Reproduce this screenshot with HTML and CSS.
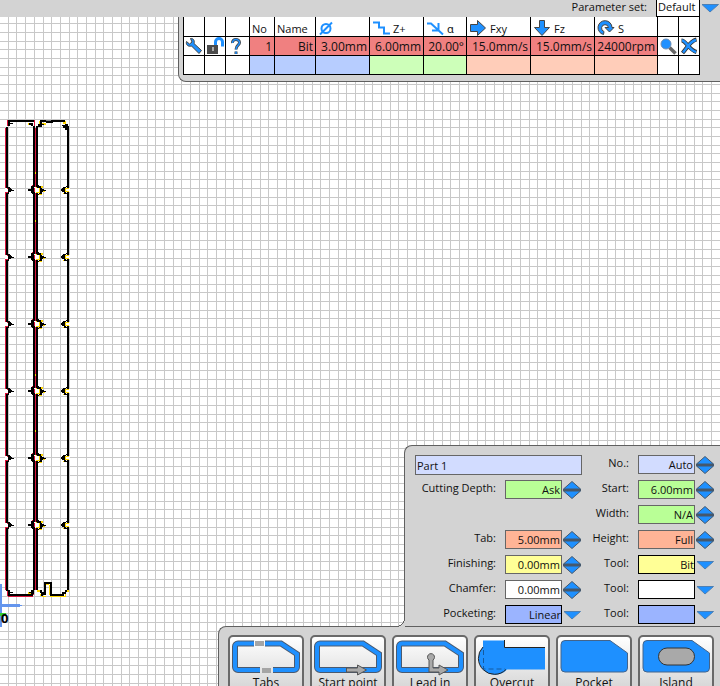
FILE: index.html
```html
<!DOCTYPE html>
<html lang="en">
<head>
<meta charset="utf-8">
<title>Toolpath editor</title>
<link rel="stylesheet" href="styles.css">
</head>
<body>
<svg class="canvas" aria-label="Workpiece" shape-rendering="crispEdges">
  <defs>
    <g id="notch">
      <path class="white" d="M5 -2h3v4h-3zM34 -3h6v6h-6zM65 -2h5v4h-5z"/>
      <path class="red" d="M5 -3h3v1h-3zM5 2h3v1h-3zM7 -2h1v1h-1zM34 -2h1v4h-1zM32 -5h1v1h-1z"/>
      <path class="yellow" d="M36 -3h4v1h-4zM36 2h4v1h-4zM39 -2h1v4h-1zM41 -4h2v2h-2zM43 1h2v1h-2zM38 4h4v1h-4zM65 -2h4v1h-4zM65 1h4v1h-4zM64 -1h2v2h-2zM63 -3h2v1h-2zM63 3h2v1h-2z"/>
      <path d="M6 -5h2v2h2v1h1v1h1v1h2v1h-3v1h-2v2h-1v1h-2v-2h2v-5h-2z"/>
      <path d="M33 -5v1h-2v3h-3v2h3v2h1v1h3v-2h-1v-5h1v-2zM36 -5h3v1h2v2h1v1h2v1h2v1h-3v1h-1v2h-3v1h-3v-1h3v-1h1v-5h-3z"/>
      <path d="M67 -5h2v2h-3v1h-1v4h1v1h3v2h-2v-1h-3v-2h-2v-1h-1v-2h1v-1h1v-1h3z"/>
    </g>
  </defs>
  <path id="grid" class="grid"/>
  <path class="red" d="M5 128h1v462h-1zM7 120h1v6h-1zM34 120h1v6h-1zM35 128h1v462h-1zM7 589h1v7h-1zM8 596h25v1h-25zM33 590h1v5h-1z"/>
  <path class="yellow" d="M39 121h2v4h-2zM42 123h4v2h-4zM63 121h3v3h-3zM28 123h4v2h-4zM64 126h2v2h-2zM35 172h1v2h-1zM35 220h1v2h-1zM35 374h1v2h-1zM35 430h1v2h-1zM37 590h3v2h-3zM40 594h2v2h-2zM42 596h4v1h-4zM46 584h3v1h-3zM49 585h1v10h-1zM50 596h16v1h-16zM65 590h4v2h-4zM65 592h1v4h-1zM28 592h3v2h-3z"/>
  <path d="M8 120h26v2h-24v1h3v1h-3v2h-2v464h2v2h3v1h-3v1h23v2h-25v-5h-2v-464h2zM33 126h2v464h-2zM29 123h4v3h-2v-1h-2zM29 592h2v-2h3v4h-3v-1h-2z"/>
  <path d="M36 126h2v464h-2zM38 124h2v-4h25v4h3v6h-3v-2h-2v-2h-1v-1h3v-3h-12v1h-7v-1h-4v2h2v1h-2v2h-4zM67 126h2v464h-2zM40 590h2v2h2v-10h8v12h10v-2h3v-2h2v2h-1v2h-2v2h-14v-12h-4v11h-3v1h-2v-3h-1z"/>
  <path class="gray" d="M46 120h5v1h-5z"/>
  <use href="#notch" y="190"/>
  <use href="#notch" y="257"/>
  <use href="#notch" y="324"/>
  <use href="#notch" y="391"/>
  <use href="#notch" y="458"/>
  <use href="#notch" y="525"/>
  <path class="axis" d="M0 584h2v20h18v1h2v1h-2v1h-18v20h-2z"/>
  <path class="green" d="M0 613h6v3h-6z"/>
  <text class="origin" x="1" y="623">0</text>
</svg>

<div class="app">
  <header class="top">
    <div class="paramset">
      <label for="pset">Parameter set:</label>
      <select id="pset"><option>Default</option></select>
      <svg class="drop" viewBox="0 0 18 18"><path d="M1 4.500H17.500L9 12z"/></svg>
    </div>
    <div class="tablebox">
      <table>
        <colgroup><col class="w21"><col class="w21"><col class="w24"><col class="w25"><col class="w41"><col class="w54"><col class="w54"><col class="w43"><col class="w64"><col class="w64"><col class="w63"><col class="w21"><col class="w21"></colgroup>
        <tr class="head">
          <th></th><th></th><th></th><th>No</th><th>Name</th>
          <th><svg viewBox="0 0 18 18"><g class="line"><circle cx="8" cy="9.500" r="4.500"/><path d="M2 15.500L14 3.500"/></g></svg></th>
          <th><svg viewBox="0 0 18 18"><path class="line" d="M1 3.500h6v5h5v6h6"/></svg>Z+</th>
          <th><svg viewBox="0 0 18 18"><path class="line" d="M1 4.500h4l12 11M12.500 4v7.500H6"/></svg>ɑ</th>
          <th><svg viewBox="0 0 18 18"><path class="solid" d="M1.500 5.500h7v-4L16.500 9l-8 7.500v-4h-7z"/></svg>Fxy</th>
          <th><svg viewBox="0 0 18 18"><path class="solid" d="M6.500 1.500h5v7h5L9 16.500 1.500 8.500h5z"/></svg>Fz</th>
          <th><svg viewBox="0 0 18 18"><path class="solid" d="M6.500 15.500A7 7 0 1 1 15 8.500h2L12.500 13 8 8.500h3.500a3.500 3.500 0 1 0-4.500 4z"/></svg>S</th>
          <th></th><th></th>
        </tr>
        <tr class="row">
          <td class="ic"><button type="button" aria-label="Edit tool"><svg viewBox="0 0 18 18"><path class="solid" d="M5.500 1.500C8.500 1 10 4 9 6.500l7.500 7-2.500 3L6.500 9C3.500 10 .5 8 1.500 4.500L4.500 7 7 5z"/></svg></button></td>
          <td class="ic"><button type="button" aria-label="Unlock tool"><svg viewBox="0 0 18 18"><path d="M9.500 8.500V5a3.500 3.500 0 0 1 7 0v4.500" fill="none" stroke="#1e90ff" stroke-width="3"/><path d="M1 8h11v9H1z" fill="#4b4b4b"/><path d="M6 10h2v4H6z" fill="#aaa"/></svg></button></td>
          <td class="ic"><button type="button" aria-label="Help"><svg viewBox="0 0 18 18"><path d="M5.500 6C5 1.500 12.500 1.500 12.500 5.500 12.500 8.500 9 8 9 12.500M9 14.500v2.500" fill="none" stroke="#444" stroke-width="3"/><path d="M5.500 6C5 1.500 12.500 1.500 12.500 5.500 12.500 8.500 9 8 9 12.500M9 14.500v2.500" fill="none" stroke="#1e90ff" stroke-width="1.500"/></svg></button></td>
          <td>1</td><td>Bit</td><td>3.00mm</td><td>6.00mm</td><td>20.00°</td><td>15.0mm/s</td><td>15.0mm/s</td><td>24000rpm</td>
          <td class="ic"><button type="button" aria-label="Find tool"><svg viewBox="0 0 18 18"><path d="M10.500 10.500l6 6" stroke="#666" stroke-width="3.500"/><circle cx="7" cy="7" r="5" fill="#1e90ff" stroke="#6e8db3"/></svg></button></td>
          <td class="ic"><button type="button" aria-label="Delete tool"><svg viewBox="0 0 18 18"><path d="M1.500 3.500C6 3.500 9 13 16.500 15M16.500 2.500C10 4 7 11 2.500 16" fill="none" stroke="#333" stroke-width="4"/><path d="M2 3.500C6 3.500 9 13 16 15M16 3C10 4 7 11 3 15.500" fill="none" stroke="#1e90ff" stroke-width="2.500"/></svg></button></td>
        </tr>
        <tr class="blank">
          <td></td><td></td><td></td><td class="b"></td><td class="b"></td><td class="b"></td><td class="g"></td><td class="g"></td><td class="o"></td><td class="o"></td><td class="o"></td><td></td><td></td>
        </tr>
      </table>
    </div>
  </header>

  <form class="props">
    <input class="name" aria-label="Part name" value="Part 1">
    <label for="no">No.:</label><input id="no" class="lilac" value="Auto"><span class="spin"></span>

    <label for="depth">Cutting Depth:</label><input id="depth" class="lime" value="Ask"><span class="spin"></span>
    <label for="start">Start:</label><input id="start" class="lime" value="6.00mm"><span class="spin"></span>

    <label class="right" for="width">Width:</label><input id="width" class="lime" value="N/A"><span class="spin"></span>

    <label for="tab">Tab:</label><input id="tab" class="salmon" value="5.00mm"><span class="spin"></span>
    <label for="height">Height:</label><input id="height" class="salmon" value="Full"><span class="spin"></span>

    <label for="fin">Finishing:</label><input id="fin" class="lemon" value="0.00mm"><span class="spin"></span>
    <label for="t1">Tool:</label><select id="t1" class="lemon"><option>Bit</option></select><svg class="drop" viewBox="0 0 18 18"><path d="M1 6.500H17.500L9 14z"/></svg>

    <label for="cham">Chamfer:</label><input id="cham" value="0.00mm"><span class="spin"></span>
    <label for="t2">Tool:</label><select id="t2"><option></option></select><svg class="drop" viewBox="0 0 18 18"><path d="M1 6.500H17.500L9 14z"/></svg>

    <label for="pock">Pocketing:</label><select id="pock" class="blue"><option>Linear</option></select><svg class="drop" viewBox="0 0 18 18"><path d="M1 6.500H17.500L9 14z"/></svg>
    <label for="t3">Tool:</label><select id="t3" class="blue"><option></option></select><svg class="drop" viewBox="0 0 18 18"><path d="M1 6.500H17.500L9 14z"/></svg>
  </form>

  <nav class="tools">
    <button type="button"><svg viewBox="0 0 76 42"><g class="pipe"><path d="M26 7.500H10a3 3 0 0 0-3 3V31a3 3 0 0 0 3 3H32M37 7.500H53L69 18V31a3 3 0 0 1-3 3H45"/><path d="M26 7.500H10a3 3 0 0 0-3 3V31a3 3 0 0 0 3 3H32M37 7.500H53L69 18V31a3 3 0 0 1-3 3H45"/></g><path d="M27 5h9v5h-9zM34 32h9v5h-9z" fill="#a5a5a5"/></svg>Tabs</button>
    <button type="button"><svg viewBox="0 0 76 42"><g class="pipe"><path d="M10 7.500H53L69 18V31a3 3 0 0 1-3 3H10a3 3 0 0 1-3-3V10.500a3 3 0 0 1 3-3z"/><path d="M10 7.500H53L69 18V31a3 3 0 0 1-3 3H10a3 3 0 0 1-3-3V10.500a3 3 0 0 1 3-3z"/></g><path class="arrow" d="M36.500 32h11v-3l9 5-9 5v-3h-11z"/></svg>Start point</button>
    <button type="button"><svg viewBox="0 0 76 42"><g class="pipe"><path d="M10 7.500H53L69 18V31a3 3 0 0 1-3 3H10a3 3 0 0 1-3-3V10.500a3 3 0 0 1 3-3z"/><path d="M10 7.500H53L69 18V31a3 3 0 0 1-3 3H10a3 3 0 0 1-3-3V10.500a3 3 0 0 1 3-3z"/></g><path class="arrow" d="M37 36V24a3.500 3.500 0 1 1 4 0v8h6v-3l9 5-9 5v-3z"/></svg>Lead in</button>
    <button type="button"><svg viewBox="0 0 76 42"><path d="M9 4.500h21v7h41v22H33A15.500 15.500 0 0 1 9 11z" fill="#1e90ff"/><path d="M9 11A15 15 0 0 0 32 33.500M30.500 4v7.500H71" fill="none" stroke="#222" stroke-width="1"/><path d="M9.500 14v19H31" fill="none" stroke="#155a9f" stroke-dasharray="5 3"/></svg>Overcut</button>
    <button type="button"><svg viewBox="0 0 76 42"><path class="plate" d="M9 4.500H54L71.500 17V32a4 4 0 0 1-4 4H9a4 4 0 0 1-4-4V8.500a4 4 0 0 1 4-4z"/></svg>Pocket</button>
    <button type="button"><svg viewBox="0 0 76 42"><path class="plate" d="M9 4.500H54L71.500 17V32a4 4 0 0 1-4 4H9a4 4 0 0 1-4-4V8.500a4 4 0 0 1 4-4z"/><rect x="20.500" y="12" width="36" height="17" rx="8.500" fill="#a9a9a9" stroke="#333"/></svg>Island</button>
  </nav>
</div>
<script src="app.js"></script>
</body>
</html>
```
FILE: styles.css
```css
* { box-sizing: border-box; }
body {
  margin: 0;
  overflow: hidden;
  background: #fff;
  color: #111;
  font: 11px/16px "Open Sans", "Noto Sans", sans-serif;
}
button, input, select { font: inherit; color: inherit; margin: 0; }
svg { display: block; }

.canvas { position: absolute; inset: 0; width: 100%; height: 100%; }
.grid { stroke: #c8c8c8; fill: none; }
.red { fill: #dc143c; }
.yellow { fill: #ffd700; }
.white { fill: #fff; }
.gray { fill: #808080; }
.axis { fill: #6495ed; }
.green { fill: #32cd32; }
.origin { font-size: 13px; font-weight: 700; fill: #000; }

.app {
  position: relative;
  display: flex;
  flex-direction: column;
  align-items: flex-end;
  height: 100vh;
}

.top { width: 100%; display: flex; flex-direction: column; align-items: flex-end; }
.paramset {
  width: 100%;
  height: 17px;
  display: flex;
  justify-content: flex-end;
  padding-right: 1px;
  background: #d3d3d3;
}
.paramset label { margin-right: 9px; line-height: 13px; }
select {
  appearance: none;
  width: 57px;
  height: 19px;
  padding: 0;
  border: 1px solid #000;
  border-radius: 0;
  background: #fff;
  text-align: right;
}
.paramset select {
  width: 44px;
  height: 17px;
  margin-right: 1px;
  border-top: 0;
  padding: 0 0 3px 1px;
  line-height: 13px;
  text-align: left;
}
.drop { width: 18px; height: 18px; flex: none; fill: #1e90ff; stroke: #4d7fb3; }

.tablebox {
  padding: 0 20px 6px 4px;
  background: #d3d3d3;
  border: solid #606060;
  border-width: 0 0 1px 1px;
  border-bottom-left-radius: 8px;
}
table { border-collapse: collapse; table-layout: fixed; width: 517px; font-size: 12px; line-height: 16px; }
.w21 { width: 21px; } .w24 { width: 24px; } .w25 { width: 25px; } .w41 { width: 41px; }
.w43 { width: 43px; } .w54 { width: 54px; } .w63 { width: 63px; } .w64 { width: 64px; }
th, td { height: 19px; padding: 0; border: 1px solid #000; background: #fff; white-space: nowrap; }
th {
  border-top: 0;
  padding: 4px 0 0 2px;
  text-align: left;
  font-weight: 400;
  font-size: 11px;
  line-height: 14px;
  vertical-align: bottom;
}
th svg { display: inline-block; width: 18px; height: 18px; margin: -3px 3px -3px 0; vertical-align: top; }
td { text-align: right; padding: 2px 2px 0 0; background: #f08080; }
td.ic { padding: 0; background: #fff; }
td button { display: block; padding: 0; border: 0; background: none; margin-left: 1px; }
td button svg { width: 18px; height: 18px; }
.blank td { background: #fff; }
.blank .b { background: #b7cdff; }
.blank .g { background: #cdffb9; }
.blank .o { background: #ffcdb9; }
.line { fill: none; stroke: #1e90ff; stroke-width: 2; }
.solid { fill: #1e90ff; stroke: #444; }

.props {
  position: relative;
  margin-top: auto;
  width: 316px;
  display: grid;
  grid-template-columns: 90px 58px 19px 56px 58px 19px;
  grid-template-rows: repeat(6, 25px) 21px;
  padding: 9px 5px 0 10px;
  background: #d3d3d3;
  border: solid #606060;
  border-width: 1px 0 0 1px;
  border-top-left-radius: 8px;
}
.props::before {
  content: "";
  position: absolute;
  left: -9px;
  bottom: -1px;
  width: 9px;
  height: 9px;
  background: radial-gradient(circle at 0 0, transparent 8px, #606060 8px, #606060 9px, #d3d3d3 9px);
}
.props label { padding-right: 9px; text-align: right; }
.props label.right { grid-column: 4; }
input {
  width: 57px;
  height: 19px;
  padding: 0 1px;
  border: 1px solid #666;
  background: #fff;
  text-align: right;
}
.name { grid-column: span 3; width: 167px; height: 20px; text-align: left; }
.name, .lilac { background: #d2dcff; }
.lime { background: #b9ff96; }
.salmon { background: #ffb496; }
.lemon { background: #ffff96; }
.blue { background: #9bb4ff; }
.spin { display: flex; flex-direction: column; width: 18px; padding-top: 1px; }
.spin button { width: 18px; height: 9px; padding: 0; border: 0; background: none; }
.spin svg { width: 18px; height: 9px; fill: #1e90ff; stroke: #46586b; }

.tools {
  width: 502px;
  height: 60px;
  overflow: hidden;
  display: flex;
  gap: 6px;
  padding: 8px 6px 0 9px;
  background: #d3d3d3;
  border: solid #606060;
  border-width: 1px 0 0 1px;
  border-top-left-radius: 8px;
}
.tools button {
  flex: 1 1 0;
  min-width: 0;
  height: 66px;
  display: flex;
  flex-direction: column;
  align-items: center;
  padding: 0;
  border: 2px solid #696969;
  border-radius: 5px;
  background: linear-gradient(#fff, #d3d3d3 90%);
  font-size: 12px;
  line-height: 16px;
}
.tools svg { flex: none; width: 76px; height: 42px; margin: -1px -2px -3px; }
.pipe path { fill: none; stroke: #4a5a70; stroke-width: 6; }
.pipe path + path { stroke: #1e90ff; stroke-width: 4; }
.arrow { fill: #a9a9a9; stroke: #555; }
.plate { fill: #1e90ff; stroke: #44648a; }
```
FILE: app.js
```js
// Grid lines snapped to whole pixels.
var STEP = 8.68;
function drawGrid() {
  var w = window.innerWidth, h = window.innerHeight, d = "", v;
  for (v = 8.3; v < w; v += STEP) d += "M" + (Math.floor(v) + 0.5) + " 0V" + h;
  for (v = 6.3; v < h; v += STEP) d += "M0 " + (Math.floor(v) + 0.5) + "H" + w;
  document.getElementById("grid").setAttribute("d", d);
}
drawGrid();
window.addEventListener("resize", drawGrid);

document.querySelectorAll(".spin").forEach(function (s) {
  s.innerHTML =
    '<button type="button" aria-label="Increase"><svg viewBox="0 0 18 9"><path d="M9 .5L17.500 8H.5z"/><path d="M0 8.500H18"/></svg></button>' +
    '<button type="button" aria-label="Decrease"><svg viewBox="0 0 18 9"><path d="M9 8.500L17.500 1H.5z"/><path d="M0 .5H18"/></svg></button>';
});
```
